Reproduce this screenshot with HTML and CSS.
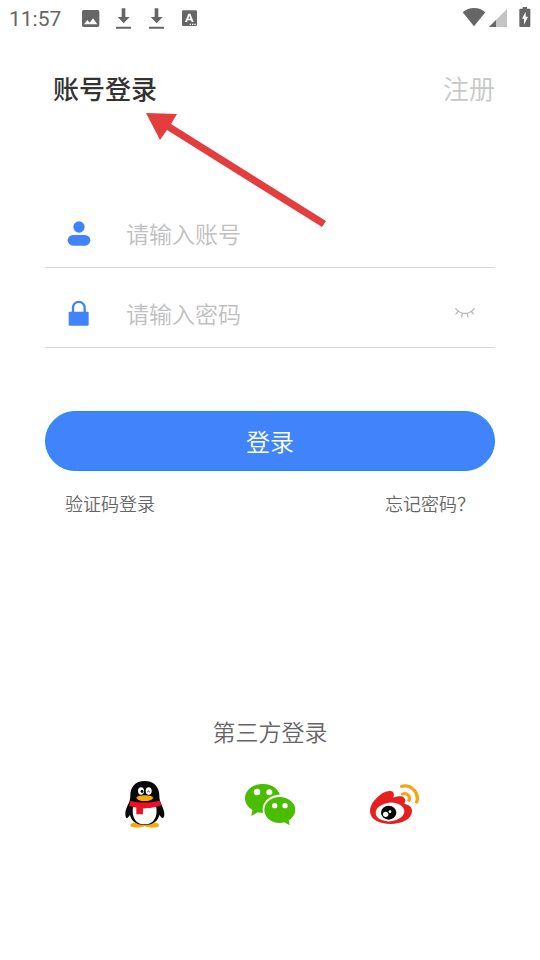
FILE: index.html
```html
<!DOCTYPE html>
<html lang="zh-CN">
<head>
<meta charset="utf-8">
<meta name="viewport" content="width=device-width, initial-scale=1">
<title>账号登录</title>
<link rel="stylesheet" href="styles.css">
</head>
<body>
<div class="status">
  <span class="time">11:57</span>
  <div class="notices">
    <svg width="20" height="24" viewBox="240 18 60 72"><path fill="#666" fill-rule="evenodd" d="M251 30h42q5 0 5 5v41q0 5-5 5h-42q-5 0-5-5V35q0-5 5-5zM252 73h40l-13-18-10 13-7-8z"/></svg>
    <svg width="20" height="24" viewBox="339 18 60 72"><path fill="#666" d="M365 25h11v26h13l-18 19-18-19h12zM348 80h45v6h-45z"/></svg>
    <svg width="20" height="24" viewBox="339 18 60 72"><path fill="#666" d="M365 25h11v26h13l-18 19-18-19h12zM348 80h45v6h-45z"/></svg>
    <svg width="20" height="24" viewBox="537 18 60 72"><path fill="#666" fill-rule="evenodd" d="M550 31h37q4 0 4 4v39q0 4-4 4h-37q-4 0-4-4V35q0-4 4-4zM565 41h6l10 25h-6l-2-5h-10l-2 5h-6zM568 48l-3 8h6zM569 71h4v4h-4zM576 71h4v4h-4zM583 71h4v4h-4z"/></svg>
  </div>
  <div class="signals">
    <svg width="24" height="24" viewBox="66 18 72 72"><path fill="#666" d="M68 37C86 20 118 20 136 37L102 79z"/></svg>
    <svg width="20" height="24" viewBox="144 18 60 72"><path fill="#c4c4c4" d="M147 81L201 27v54z"/><path fill="#666" d="M147 81l21-21v21z"/></svg>
    <svg width="12" height="24" viewBox="236 18 36 72"><path fill="#666" d="M247 21h13v5h7q3 0 3 3v49q0 3-3 3h-27q-3 0-3-3V29q0-3 3-3h7z"/><path fill="#fff" d="M256 35v15h7l-12 24V56h-6z"/></svg>
  </div>
</div>
<main class="page">
  <header class="header">
    <h1 class="title">账号登录</h1>
    <a class="register" href="#">注册</a>
  </header>
  <form class="form">
    <div class="field">
      <label class="field-icon" for="account"><svg width="26" height="26" viewBox="79 27 78 78"><circle cx="118" cy="48" r="17" fill="#4083fb"/><rect x="84" y="72" width="68" height="32" rx="16" fill="#4083fb"/></svg></label>
      <input class="input" id="account" type="text" placeholder="请输入账号">
    </div>
    <div class="field">
      <label class="field-icon" for="password"><svg width="26" height="26" viewBox="79 267 78 78"><path d="M100 306v-16a17 17 0 0 1 35 0v16" fill="none" stroke="#4083fb" stroke-width="7"/><rect x="87" y="302" width="60" height="42" rx="3" fill="#4083fb"/></svg></label>
      <input class="input" id="password" type="password" placeholder="请输入密码">
      <button class="eye" type="button" aria-label="显示密码"><svg width="24" height="16" viewBox="69 45 72 48" fill="none" stroke="#b8b8b8" stroke-width="4"><path d="M76 55Q105 86 134 55M84 64l-7 9M97 70l-2 12M112 70l2 12M124 64l7 9"/></svg></button>
    </div>
    <button class="submit" type="button">登录</button>
    <div class="links">
      <a href="#">验证码登录</a>
      <a href="#">忘记密码？</a>
    </div>
  </form>
  <section class="third">
    <h2 class="third-title">第三方登录</h2>
    <div class="providers">
      <a href="#" aria-label="QQ"><svg width="50" height="50" viewBox="30 27 150 150">
        <path fill="#fba80b" d="M83 157q-22 1-22 9c0 6 10 7 21 7 12 0 21-3 22-5 1 2 10 5 22 5 11 0 21-1 21-7q0-8-22-9z"/>
        <path fill="#080808" d="M104 33c-28 0-43 18-43 43 0 8-1 12-3 19-7 14-13 27-12 38 0 9 3 13 7 10l7-8c4 17 17 30 44 30s40-13 44-30l7 8c4 3 8-1 8-10 0-11-6-24-12-38-2-7-3-11-3-19 0-25-16-43-44-43z"/>
        <path fill="#fff" d="M70 108q34 13 68 0c6 27-3 55-34 55s-40-28-34-55z"/>
        <path fill="#ea1225" d="M60 93q45 10 89-1l5 14q-22 9-55 9v18h-20V113l-21-5z"/>
        <ellipse cx="93" cy="63" rx="9" ry="11" fill="#fff"/><ellipse cx="116" cy="63" rx="9" ry="11" fill="#fff"/>
        <ellipse cx="96" cy="64" rx="4" ry="5" fill="#080808"/><path d="M112 66q3-6 7 0" fill="none" stroke="#080808" stroke-width="3"/>
        <path fill="#fba80b" d="M79 83q5-7 25-7t26 7q-5 10-26 10t-25-10z"/>
      </svg></a>
      <a href="#" aria-label="微信"><svg width="50" height="50" viewBox="30 27 150 150">
        <path fill="#4bbd00" d="M84 42c-31 0-54 19-54 43 0 15 9 27 22 35l-3 18 19-11q9 2 18 2c29 0 50-19 50-44S113 42 84 42z"/>
        <ellipse cx="134" cy="119" rx="51" ry="45" fill="#fff"/>
        <path fill="#4bbd00" d="M134 81c-26 0-46 17-46 39s20 39 46 39q8 0 14-2l16 9-3-15c12-7 20-18 20-31 0-22-21-39-47-39z"/>
        <g fill="#fff"><circle cx="66" cy="66" r="10"/><circle cx="103" cy="67" r="9"/><circle cx="119" cy="107" r="8"/><circle cx="150" cy="107" r="8"/></g>
      </svg></a>
      <a href="#" aria-label="微博"><svg width="50" height="50" viewBox="30 27 150 150">
        <path fill="#e6201d" d="M89 63c12-1 15 8 11 20 10-3 25-7 32 0 5 4 4 11 1 18 13 3 23 9 23 22 0 24-31 39-64 39-36 0-62-15-62-39 0-27 36-60 59-60z"/>
        <ellipse cx="90" cy="126" rx="43" ry="28" transform="rotate(-6 90 126)" fill="#fff"/>
        <ellipse cx="86" cy="128" rx="23" ry="21" fill="#080808"/>
        <circle cx="77" cy="133" r="8" fill="#fff"/><circle cx="90" cy="125" r="4" fill="#fff"/>
        <path d="M125 49c28-7 54 19 45 47M128 72c13-4 24 7 19 19" fill="none" stroke="#f5a51b" stroke-width="10" stroke-linecap="round"/>
      </svg></a>
    </div>
  </section>
</main>
<svg class="arrow" width="182" height="118" viewBox="145 111 182 118"><path fill="#e43d3d" d="M146 113L177 114 171 124 326 221 322 227 167 130 160 140z"/></svg>
</body>
</html>
```
FILE: styles.css
```css
* {
  box-sizing: border-box;
}

body {
  position: relative;
  margin: 0;
  min-height: 100vh;
  background: #fff;
  color: #666;
  font-family: "Noto Sans CJK SC", sans-serif;
  font-weight: 350;
}

svg {
  display: block;
}

a {
  color: inherit;
  text-decoration: none;
}

button {
  border: 0;
  padding: 0;
  background: none;
  font: inherit;
}

.status {
  display: flex;
  align-items: center;
  height: 36px;
  padding: 0 9px;
}

.time {
  padding-top: 2px;
  font-family: Roboto, sans-serif;
  font-size: 21px;
  font-weight: 400;
  line-height: 36px;
}

.notices {
  display: flex;
  gap: 13px;
  margin-left: 19px;
}

.signals {
  display: flex;
  align-items: center;
  gap: 2px;
  margin-left: auto;
}

.signals svg:last-child {
  margin-left: 9px;
}

.page {
  padding: 32px 45px;
}

.header {
  display: flex;
  justify-content: space-between;
  padding-left: 8px;
  font-size: 26px;
  line-height: 40px;
}

.title {
  margin: 0;
  color: #333;
  font-size: 26px;
  font-weight: 500;
}

.register {
  color: #c8c8c8;
}

.form {
  margin-top: 92px;
}

.field {
  display: flex;
  align-items: center;
  height: 68px;
  padding: 0 18px 2px 21px;
  border-bottom: 1px solid #d8d8d8;
}

.field + .field {
  margin-top: 12px;
}

.input {
  flex: 1;
  min-width: 0;
  margin-left: 34px;
  padding: 0;
  border: 0;
  outline: 0;
  background: none;
  color: #333;
  font: inherit;
  font-size: 23px;
  line-height: 34px;
}

.input::placeholder {
  color: #c0c0c0;
  opacity: 1;
}

.submit {
  display: block;
  width: 100%;
  height: 60px;
  margin-top: 63px;
  padding-bottom: 2px;
  border: 1px solid #1a90f2;
  border-radius: 30px;
  background: #4083fb;
  color: #fff;
  font-size: 24px;
}

.links {
  display: flex;
  justify-content: space-between;
  margin-top: 19px;
  padding: 0 20px;
  font-size: 18px;
  line-height: 26px;
}

.third {
  margin-top: 198px;
}

.third-title {
  margin: 0;
  font-size: 23px;
  font-weight: inherit;
  line-height: 34px;
  text-align: center;
}

.providers {
  display: flex;
  justify-content: center;
  gap: 75px;
  margin-top: 31px;
}

.arrow {
  position: absolute;
  top: 111px;
  left: 145px;
  pointer-events: none;
}
```
